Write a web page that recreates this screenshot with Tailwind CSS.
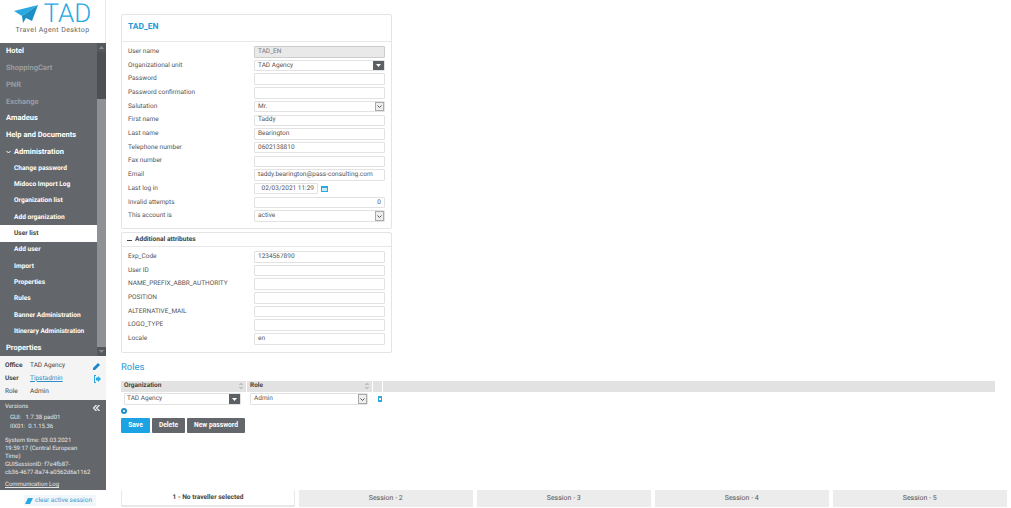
<!DOCTYPE html>
<html><head><meta charset="utf-8"><script src="https://cdn.jsdelivr.net/npm/@tailwindcss/browser@4"></script></head>
<body class="bg-white">
<div class="flex h-[508px] w-[1011px] overflow-hidden bg-white font-['Roboto',sans-serif] text-[6.500px] text-[#555] antialiased [text-rendering:geometricPrecision]">
  <!-- Sidebar -->
  <aside class="flex w-[106px] shrink-0 flex-col">
    <div class="flex h-[43px] flex-col items-center border-r border-[#e8e8e8] pt-[4px]">
      <div class="flex h-[21px] items-center">
        <svg width="24" height="19" viewBox="0 0 24 19"><path d="M0 6 24 0 8 11Z" fill="#29a9e1"/><path d="M24 0 8 11l1 7 3-5 6 3Z" fill="#1b8fc6"/></svg>
        <span class="ml-[6px] text-[26px] leading-[21px] font-light text-[#29a9e1]">TAD</span>
      </div>
      <span class="mt-[1px] text-[7px] leading-[8px] tracking-[0.4px] text-[#666]">Travel Agent Desktop</span>
    </div>
    <div class="flex h-[313px] bg-[#63666b]">
      <nav class="flex w-[97px] flex-col overflow-hidden text-[7.500px] font-bold text-white *:shrink-0">
        <a class="flex h-[16px] items-center pb-[1px] pl-[6px]">Hotel</a>
        <a class="flex h-[16.900px] items-center pl-[6px] text-[#9a9da1]">ShoppingCart</a>
        <a class="flex h-[16.900px] items-center pl-[6px] text-[#9a9da1]">PNR</a>
        <a class="flex h-[16.900px] items-center pl-[6px] text-[#9a9da1]">Exchange</a>
        <a class="flex h-[16.900px] items-center pl-[6px]">Amadeus</a>
        <a class="flex h-[16.900px] items-center pl-[6px]">Help and Documents</a>
        <a class="flex h-[16.350px] items-center pl-[6px]"><svg class="mr-[3px]" width="5" height="4" viewBox="0 0 5 4"><path d="M.5 1 2.500 3 4.500 1" fill="none" stroke="#fff"/></svg>Administration</a>
        <div class="flex flex-col text-[6.600px]">
          <a class="flex h-[16.350px] items-center pl-[14px] pt-[1px]">Change password</a>
          <a class="flex h-[16.350px] items-center pl-[14px] pt-[1px]">Midoco Import Log</a>
          <a class="flex h-[16.350px] items-center pl-[14px] pt-[1px]">Organization list</a>
          <a class="flex h-[16.350px] items-center pl-[14px] pt-[1px]">Add organization</a>
          <a class="flex h-[16.350px] items-center bg-white pl-[14px] pt-[1px] text-[#444]">User list</a>
          <a class="flex h-[16.350px] items-center pl-[14px] pt-[1px]">Add user</a>
          <a class="flex h-[16.350px] items-center pl-[14px] pt-[1px]">Import</a>
          <a class="flex h-[16.350px] items-center pl-[14px] pt-[1px]">Properties</a>
          <a class="flex h-[16.350px] items-center pl-[14px] pt-[1px]">Rules</a>
          <a class="flex h-[16.350px] items-center pl-[14px] pt-[1px]">Banner Administration</a>
          <a class="flex h-[16.350px] items-center pl-[14px] pt-[1px]">Itinerary Administration</a>
        </div>
        <a class="flex h-[16.600px] items-center pl-[6px]">Properties</a>
      </nav>
      <div class="flex w-[9px] flex-col bg-[#55585c]">
        <div class="flex h-[9px] items-center justify-center"><svg width="5" height="3" viewBox="0 0 5 3"><path d="M0 3 2.500 0 5 3Z" fill="#8a8d90"/></svg></div>
        <div class="h-[47px] bg-[#4e5054]"></div>
        <div class="flex-1 bg-[#8f9194]"></div>
        <div class="flex h-[9px] items-center justify-center"><svg width="5" height="3" viewBox="0 0 5 3"><path d="M0 0 2.500 3 5 0Z" fill="#8a8d90"/></svg></div>
      </div>
    </div>
    <div class="flex h-[44px] flex-col justify-center gap-[4px] bg-[#f4f4f4] pl-[5px] pt-[1px] text-[#444]">
      <div class="flex h-[9px] items-center"><b class="w-[25px]">Office</b><span>TAD Agency</span><svg class="ml-auto mr-[5px]" width="8" height="8" viewBox="0 0 8 8"><path d="M0 8V6L5 1l2 2-5 5Z" fill="#1b87c9"/></svg></div>
      <div class="flex h-[9px] items-center"><b class="w-[25px]">User</b><span class="text-[#2a8fc4] underline">Tipstadmin</span><svg class="ml-auto mr-[5px]" width="8" height="8" viewBox="0 0 8 8"><path d="M3 0H1v8h2V7H2V1h1ZM3 2.500h2V1l3 3-3 3V5.500H3Z" fill="#29a9e1"/></svg></div>
      <div class="flex h-[9px] items-center"><b class="w-[25px] font-normal">Role</b><span>Admin</span></div>
    </div>
    <div class="flex h-[90px] flex-col bg-[#63666b] pl-[5px] pt-[3px] text-[6px] leading-[8px] text-[#e6e6e6]">
      <div class="flex"><span>Versions</span><svg class="ml-auto mr-[6px] mt-[2px]" width="7" height="6" viewBox="0 0 7 6"><path d="M3.500 0 .5 3l3 3M6.500 0l-3 3 3 3" fill="none" stroke="#e6e6e6" stroke-width="1.400"/></svg></div>
      <div class="mt-[3px] pl-[5px]">GUI:&nbsp;&nbsp;&nbsp;1.7.38 pad01</div>
      <div class="mt-[1px] pl-[5px]">IIX01:&nbsp;&nbsp;0.1.15.36</div>
      <div class="mt-[6px] pr-[20px]">System time: 03.03.2021 19:59:17 (Central European Time)</div>
      <div>GUISessionID: f7e4fb87-<br>cb36-4677-8a74-a0562d6a1162</div>
      <div class="mt-[4px] underline">Communication Log</div>
    </div>
    <div class="flex flex-1 items-center pl-[24px] pt-[3px]">
      <span class="flex h-[11px] w-[72px] items-center gap-[2px] bg-[#f0f6fa] px-[1px] text-[#3d9bd0]"><svg width="8" height="6" viewBox="0 0 8 6"><path d="M3 0h5L5 6H0Z" fill="#29a9e1"/></svg>clear active session</span>
    </div>
  </aside>
  <!-- Main -->
  <main class="flex min-w-0 flex-1 flex-col">
    <div class="flex-1 pl-[15px] pt-[14px]">
      <section class="w-[271px] rounded-[2px] border border-[#e4e4e4]">
        <h1 class="flex h-[27px] items-center border-b border-[#e8e8e8] pl-[6px] pb-[2px] text-[8.500px] font-bold text-[#1f9ad6]">TAD_EN</h1>
        <div class="flex flex-col pl-[6px] pr-[5px] pt-[3px] pb-[5px]">
          <div class="flex h-[13.700px] items-center"><span class="w-[126px]">User name</span><div class="flex h-[11.500px] w-[131px] items-center rounded-[1px] border border-[#ccc] bg-[#e9e9e9] pl-[3px] text-[#777]">TAD_EN</div></div>
          <div class="flex h-[13.700px] items-center"><span class="w-[126px]">Organizational unit</span><div class="flex h-[11.500px] w-[131px] items-center justify-between rounded-[1px] border border-[#e2e2e2] pl-[3px]">TAD Agency<span class="flex h-full w-[11px] items-center justify-center bg-[#5c5f64]"><svg width="5" height="3" viewBox="0 0 5 3"><path d="M0 0h5L2.500 3Z" fill="#fff"/></svg></span></div></div>
          <div class="flex h-[13.700px] items-center"><span class="w-[126px]">Password</span><div class="h-[11.500px] w-[131px] rounded-[1px] border border-[#e2e2e2]"></div></div>
          <div class="flex h-[13.700px] items-center"><span class="w-[126px]">Password confirmation</span><div class="h-[11.500px] w-[131px] rounded-[1px] border border-[#e2e2e2]"></div></div>
          <div class="flex h-[13.700px] items-center"><span class="w-[126px]">Salutation</span><div class="flex h-[11.500px] w-[131px] items-center justify-between rounded-[1px] border border-[#e2e2e2] pl-[3px]">Mr.<span class="flex h-full w-[9px] items-center justify-center border border-[#aaa] bg-[#eee]"><svg width="5" height="3" viewBox="0 0 5 3"><path d="M.5.5 2.500 2.500 4.500.5" fill="none" stroke="#555"/></svg></span></div></div>
          <div class="flex h-[13.700px] items-center"><span class="w-[126px]">First name</span><div class="flex h-[11.500px] w-[131px] items-center rounded-[1px] border border-[#e2e2e2] pl-[3px]">Taddy</div></div>
          <div class="flex h-[13.700px] items-center"><span class="w-[126px]">Last name</span><div class="flex h-[11.500px] w-[131px] items-center rounded-[1px] border border-[#e2e2e2] pl-[3px]">Bearington</div></div>
          <div class="flex h-[13.700px] items-center"><span class="w-[126px]">Telephone number</span><div class="flex h-[11.500px] w-[131px] items-center rounded-[1px] border border-[#e2e2e2] pl-[3px]">0602138810</div></div>
          <div class="flex h-[13.700px] items-center"><span class="w-[126px]">Fax number</span><div class="h-[11.500px] w-[131px] rounded-[1px] border border-[#e2e2e2]"></div></div>
          <div class="flex h-[13.700px] items-center"><span class="w-[126px]">Email</span><div class="flex h-[11.500px] w-[131px] items-center rounded-[1px] border border-[#e2e2e2] pl-[3px]">taddy.bearington@pass-consulting.com</div></div>
          <div class="flex h-[13.700px] items-center"><span class="w-[126px]">Last log in</span><div class="flex h-[11.500px] w-[64px] items-center justify-end rounded-[1px] border border-[#e2e2e2] pr-[3px]">02/03/2021 11:29</div><svg class="ml-[3px]" width="7" height="7" viewBox="0 0 7 7"><path d="M0 1h7v6H0Z" fill="#29a9e1"/><path d="M1 3h5v3H1Z" fill="#cfeaf7"/></svg></div>
          <div class="flex h-[13.700px] items-center"><span class="w-[126px]">Invalid attempts</span><div class="flex h-[11.500px] w-[131px] items-center justify-end rounded-[1px] border border-[#e2e2e2] pr-[3px]">0</div></div>
          <div class="flex h-[13.700px] items-center"><span class="w-[126px]">This account is</span><div class="flex h-[11.500px] w-[131px] items-center justify-between rounded-[1px] border border-[#e2e2e2] pl-[3px]">active<span class="flex h-full w-[9px] items-center justify-center border border-[#aaa] bg-[#eee]"><svg width="5" height="3" viewBox="0 0 5 3"><path d="M.5.5 2.500 2.500 4.500.5" fill="none" stroke="#555"/></svg></span></div></div>
        </div>
      </section>
      <section class="mt-[3px] w-[271px] rounded-[2px] border border-[#e4e4e4]">
        <h2 class="flex h-[14px] items-center gap-[3px] border-b border-[#e8e8e8] pl-[5px] pt-[2px] text-[6.600px] font-bold text-[#444]"><span class="h-[1px] w-[5px] bg-[#444]"></span>Additional attributes</h2>
        <div class="flex flex-col pl-[6px] pr-[5px] pt-[3px] pb-[6px]">
          <div class="flex h-[13.700px] items-center"><span class="w-[126px]">Exp_Code</span><div class="flex h-[11.500px] w-[131px] items-center rounded-[1px] border border-[#e2e2e2] pl-[3px]">1234567890</div></div>
          <div class="flex h-[13.700px] items-center"><span class="w-[126px]">User ID</span><div class="h-[11.500px] w-[131px] rounded-[1px] border border-[#e2e2e2]"></div></div>
          <div class="flex h-[13.700px] items-center"><span class="w-[126px]">NAME_PREFIX_ABBR_AUTHORITY</span><div class="h-[11.500px] w-[131px] rounded-[1px] border border-[#e2e2e2]"></div></div>
          <div class="flex h-[13.700px] items-center"><span class="w-[126px]">POSITION</span><div class="h-[11.500px] w-[131px] rounded-[1px] border border-[#e2e2e2]"></div></div>
          <div class="flex h-[13.700px] items-center"><span class="w-[126px]">ALTERNATIVE_MAIL</span><div class="h-[11.500px] w-[131px] rounded-[1px] border border-[#e2e2e2]"></div></div>
          <div class="flex h-[13.700px] items-center"><span class="w-[126px]">LOGO_TYPE</span><div class="h-[11.500px] w-[131px] rounded-[1px] border border-[#e2e2e2]"></div></div>
          <div class="flex h-[13.700px] items-center"><span class="w-[126px]">Locale</span><div class="flex h-[11.500px] w-[131px] items-center rounded-[1px] border border-[#e2e2e2] pl-[3px]">en</div></div>
        </div>
      </section>
      <h3 class="mt-[9px] text-[9.500px] leading-[12px] text-[#2b9bd4]">Roles</h3>
      <div class="mt-[7px] flex h-[11px] w-[874px] items-center gap-[1px] font-bold text-[#444]">
        <div class="flex h-full w-[125px] items-center justify-between bg-[#e2e2e2] px-[3px]">Organization<svg width="4" height="6" viewBox="0 0 4 6"><path d="M.5 2 2 .5 3.500 2M.5 4 2 5.500 3.500 4" fill="none" stroke="#777" stroke-width=".6"/></svg></div>
        <div class="flex h-full w-[125px] items-center justify-between bg-[#e2e2e2] px-[3px]">Role<svg width="4" height="6" viewBox="0 0 4 6"><path d="M.5 2 2 .5 3.500 2M.5 4 2 5.500 3.500 4" fill="none" stroke="#777" stroke-width=".6"/></svg></div>
        <div class="h-full w-[9px] bg-[#e2e2e2]"></div>
        <div class="h-full flex-1 bg-[#e2e2e2]"></div>
      </div>
      <div class="mt-[1px] flex h-[13px] items-center pl-[3px]">
        <div class="flex h-[12px] w-[117px] items-center justify-between rounded-[1px] border border-[#e2e2e2] pl-[2px]">TAD Agency<span class="flex h-full w-[11px] items-center justify-center bg-[#5c5f64]"><svg width="5" height="3" viewBox="0 0 5 3"><path d="M0 0h5L2.500 3Z" fill="#fff"/></svg></span></div>
        <div class="ml-[9px] flex h-[12px] w-[118px] items-center justify-between rounded-[1px] border border-[#e2e2e2] pl-[3px]">Admin<span class="flex h-full w-[9px] items-center justify-center border border-[#aaa] bg-[#eee]"><svg width="5" height="3" viewBox="0 0 5 3"><path d="M.5.5 2.500 2.500 4.500.5" fill="none" stroke="#555"/></svg></span></div>
        <span class="ml-[10px] flex h-[6px] w-[4px] items-center justify-center bg-[#29a9e1]"><span class="h-[2px] w-[2px] bg-white"></span></span>
      </div>
      <div class="mt-[2px] flex h-[6px] items-center"><span class="flex h-[6px] w-[6px] items-center justify-center rounded-full bg-[#1f8ec9]"><span class="h-[2px] w-[2px] rounded-full bg-white"></span></span></div>
      <div class="mt-[4px] flex gap-[2px] text-[6.700px] font-bold text-white">
        <button class="h-[15px] w-[29px] rounded-[1px] bg-[#1ba3e4]">Save</button>
        <button class="h-[15px] w-[33px] rounded-[1px] bg-[#63666b]">Delete</button>
        <button class="h-[15px] w-[58px] rounded-[1px] bg-[#63666b]">New password</button>
      </div>
    </div>
    <div class="flex h-[18px] items-stretch gap-[3.500px] pb-[1px] pl-[15px] pr-[4px] text-center text-[7px]">
      <div class="flex w-[174px] items-center justify-center rounded-t-[1px] border border-b-2 border-t-0 border-[#e8e8e8] pt-[1px] text-[6.600px] font-bold text-[#444]">1 - No traveller selected</div>
      <div class="flex flex-1 items-center justify-center bg-[#ececec] text-[#555]">Session - 2</div>
      <div class="flex flex-1 items-center justify-center bg-[#ececec] text-[#555]">Session - 3</div>
      <div class="flex flex-1 items-center justify-center bg-[#ececec] text-[#555]">Session - 4</div>
      <div class="flex flex-1 items-center justify-center bg-[#ececec] text-[#555]">Session - 5</div>
    </div>
  </main>
</div>
</body></html>
